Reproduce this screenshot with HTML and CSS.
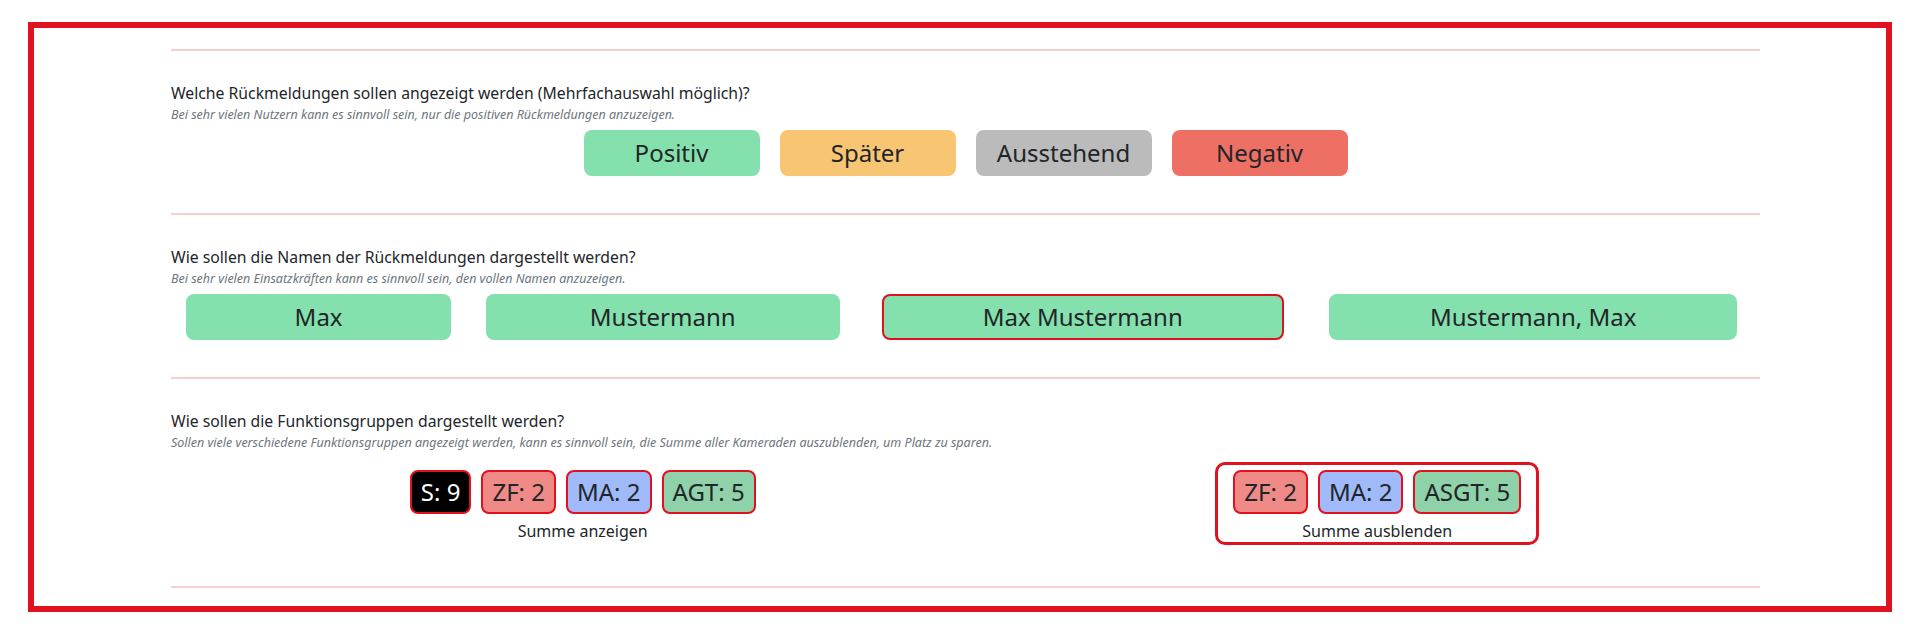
FILE: index.html
```html
<!DOCTYPE html>
<html lang="de">
<head>
    <meta charset="UTF-8">
    <meta name="viewport" content="width=device-width, initial-scale=1.0">
    <title>Einstellungen</title>
    <link rel="stylesheet" href="styles.css">
</head>
<body>
    <div class="frame">
        <div class="settings">
            <div class="sep"></div>

            <div class="block">
                <p class="q">Welche Rückmeldungen sollen angezeigt werden (Mehrfachauswahl möglich)?</p>
                <p class="hint">Bei sehr vielen Nutzern kann es sinnvoll sein, nur die positiven Rückmeldungen anzuzeigen.</p>
                <div class="status-row">
                    <div class="btn status st-pos">Positiv</div>
                    <div class="btn status st-later">Später</div>
                    <div class="btn status st-wait">Ausstehend</div>
                    <div class="btn status st-neg">Negativ</div>
                </div>
            </div>

            <div class="sep"></div>

            <div class="block">
                <p class="q">Wie sollen die Namen der Rückmeldungen dargestellt werden?</p>
                <p class="hint">Bei sehr vielen Einsatzkräften kann es sinnvoll sein, den vollen Namen anzuzeigen.</p>
                <div class="name-row">
                    <div class="name-opt"><div class="btn name-btn">Max</div></div>
                    <div class="name-opt"><div class="btn name-btn">Mustermann</div></div>
                    <div class="name-opt"><div class="btn name-btn selected">Max Mustermann</div></div>
                    <div class="name-opt"><div class="btn name-btn">Mustermann, Max</div></div>
                </div>
            </div>

            <div class="sep"></div>

            <div class="block block-last">
                <p class="q">Wie sollen die Funktionsgruppen dargestellt werden?</p>
                <p class="hint">Sollen viele verschiedene Funktionsgruppen angezeigt werden, kann es sinnvoll sein, die Summe aller Kameraden auszublenden, um Platz zu sparen.</p>
                <div class="fg-row">
                    <div class="fg-opt">
                        <div class="badges">
                            <span class="badge b-sum">S: 9</span>
                            <span class="badge b-zf">ZF: 2</span>
                            <span class="badge b-ma">MA: 2</span>
                            <span class="badge b-agt">AGT: 5</span>
                        </div>
                        <div class="fg-label">Summe anzeigen</div>
                    </div>
                    <div class="fg-opt selected">
                        <div class="badges">
                            <span class="badge b-zf">ZF: 2</span>
                            <span class="badge b-ma">MA: 2</span>
                            <span class="badge b-agt">ASGT: 5</span>
                        </div>
                        <div class="fg-label">Summe ausblenden</div>
                    </div>
                </div>
            </div>

            <div class="sep"></div>
        </div>
    </div>
</body>
</html>
```

FILE: styles.css
```css
    body{
        margin: 0;
        font-family: "Noto Sans", "Open Sans", sans-serif;
        color: #212529;
        background: #fff;
    }
    .frame{
        margin: 22px 28px;
        border: 6px solid #e1111f;
        padding: 21px 126px 18px 137px;
    }
    .sep{
        height: 0;
        border-top: 2px solid #f7cdd0;
    }
    .block{
        padding: 31px 0 37px;
    }
    .block-last{
        padding-bottom: 41px;
    }
    .q{
        margin: 0;
        font-size: 15.75px;
        line-height: 22px;
    }
    .hint{
        margin: 3px 0 7px;
        font-size: 12.5px;
        line-height: 16px;
        font-style: italic;
        color: #6c757d;
    }
    .btn{
        box-sizing: border-box;
        font-size: 24px;
        line-height: 34px;
        padding: 6px 0;
        text-align: center;
        border-radius: 8px;
        background: #84e1ad;
    }
    .status-row{
        display: flex;
        justify-content: center;
    }
    .status{
        width: 176px;
        margin: 0 10px;
    }
    .st-pos{ background: #84e1ad; }
    .st-later{ background: #f8c572; }
    .st-wait{ background: #bbbbbb; }
    .st-neg{ background: #ee7064; }

    .name-row{
        display: flex;
    }
    .name-opt{
        flex: 1 1 auto;
        display: flex;
        justify-content: center;
    }
    .name-btn{
        width: 90%;
        border: 2px solid transparent;
        padding: 4px 0;
    }
    .name-btn.selected{
        border-color: #e1111f;
    }

    .fg-row{
        display: flex;
        justify-content: space-around;
        margin-top: 11px;
    }
    .fg-opt{
        border: 3px solid transparent;
        border-radius: 10px;
        padding: 5px 10px 0;
        text-align: center;
    }
    .fg-opt.selected{
        border-color: #e1111f;
    }
    .badges{
        display: flex;
        justify-content: center;
    }
    .badge{
        margin: 0 5px;
        border: 2px solid #e1111f;
        border-radius: 8px;
        padding: 3px 9px;
        font-size: 24px;
        line-height: 34px;
    }
    .b-sum{ background: #000; color: #fff; }
    .b-zf{ background: #f08a86; }
    .b-ma{ background: #a0baf9; }
    .b-agt{ background: #8fd1a8; }
    .fg-label{
        margin-top: 6px;
        font-size: 16px;
        line-height: 22px;
    }
```
